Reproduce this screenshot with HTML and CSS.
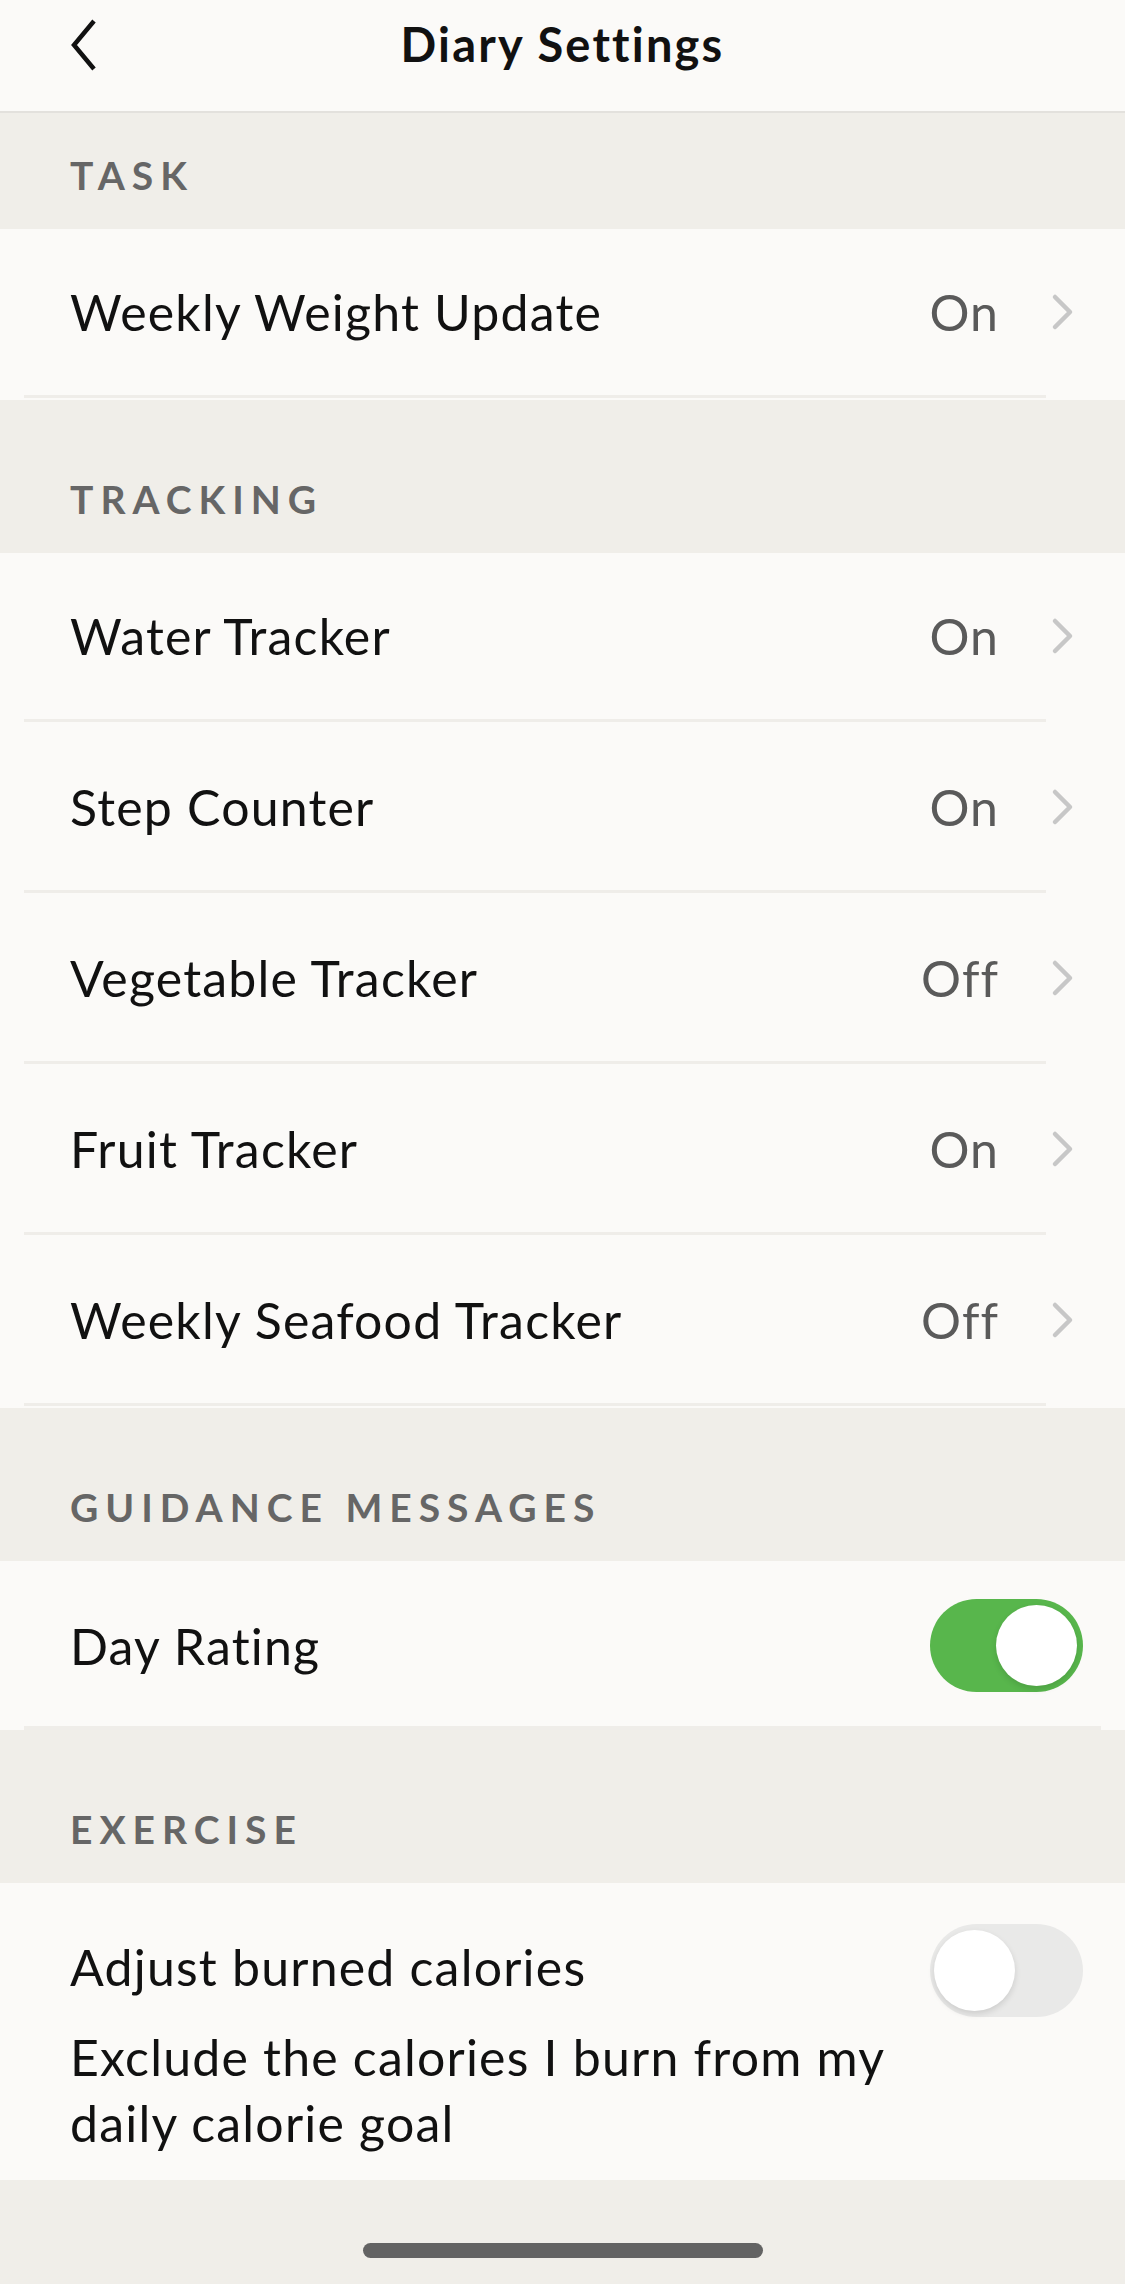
FILE: index.html
```html
<!DOCTYPE html>
<html lang="en">
<head>
    <meta charset="UTF-8">
    <meta name="viewport" content="width=device-width, initial-scale=1.0">
    <title>Diary Settings</title>
    <link rel="stylesheet" href="styles.css">
</head>
<body>
    <div class="navbar">
        <div class="nav-left">
            <svg class="back" width="28" height="52" viewBox="0 0 28 52">
                <polyline points="24,2 4,26 24,50" fill="none" stroke="#111" stroke-width="4.5"/>
            </svg>
        </div>
        <h1>Diary Settings</h1>
        <div class="nav-right"></div>
    </div>

    <div class="section first">
        <div class="section-title">TASK</div>
        <div class="row">
            <span class="label">Weekly Weight Update</span>
            <span class="value">On</span>
            <svg class="chev" width="24" height="38" viewBox="0 0 24 38"><polyline points="4,4 19,19 4,34" fill="none" stroke="#c7c7c7" stroke-width="4.5" stroke-linecap="round" stroke-linejoin="round"/></svg>
        </div>
    </div>

    <div class="section">
        <div class="section-title">TRACKING</div>
        <div class="row">
            <span class="label">Water Tracker</span>
            <span class="value">On</span>
            <svg class="chev" width="24" height="38" viewBox="0 0 24 38"><polyline points="4,4 19,19 4,34" fill="none" stroke="#c7c7c7" stroke-width="4.5" stroke-linecap="round" stroke-linejoin="round"/></svg>
        </div>
        <div class="row">
            <span class="label">Step Counter</span>
            <span class="value">On</span>
            <svg class="chev" width="24" height="38" viewBox="0 0 24 38"><polyline points="4,4 19,19 4,34" fill="none" stroke="#c7c7c7" stroke-width="4.5" stroke-linecap="round" stroke-linejoin="round"/></svg>
        </div>
        <div class="row">
            <span class="label">Vegetable Tracker</span>
            <span class="value">Off</span>
            <svg class="chev" width="24" height="38" viewBox="0 0 24 38"><polyline points="4,4 19,19 4,34" fill="none" stroke="#c7c7c7" stroke-width="4.5" stroke-linecap="round" stroke-linejoin="round"/></svg>
        </div>
        <div class="row">
            <span class="label">Fruit Tracker</span>
            <span class="value">On</span>
            <svg class="chev" width="24" height="38" viewBox="0 0 24 38"><polyline points="4,4 19,19 4,34" fill="none" stroke="#c7c7c7" stroke-width="4.5" stroke-linecap="round" stroke-linejoin="round"/></svg>
        </div>
        <div class="row">
            <span class="label">Weekly Seafood Tracker</span>
            <span class="value">Off</span>
            <svg class="chev" width="24" height="38" viewBox="0 0 24 38"><polyline points="4,4 19,19 4,34" fill="none" stroke="#c7c7c7" stroke-width="4.5" stroke-linecap="round" stroke-linejoin="round"/></svg>
        </div>
    </div>

    <div class="section">
        <div class="section-title">GUIDANCE MESSAGES</div>
        <div class="row toggle-row">
            <span class="label">Day Rating</span>
            <div class="switch on"><div class="knob"></div></div>
        </div>
    </div>

    <div class="section">
        <div class="section-title">EXERCISE</div>
        <div class="row exercise-row">
            <div class="exercise-text">
                <div class="label">Adjust burned calories</div>
                <div class="desc">Exclude the calories I burn from my daily calorie goal</div>
            </div>
            <div class="switch"><div class="knob"></div></div>
        </div>
    </div>

    <div class="home-area">
        <div class="home-bar"></div>
    </div>
</body>
</html>
```

FILE: styles.css
```css
body {
    margin: 0;
    width: 1125px;
    min-height: 2284px;
    background-color: #f0eee9;
    font-family: Lato, "Noto Sans", sans-serif;
    color: #111;
}
.navbar {
    display: grid;
    grid-template-columns: 1fr auto 1fr;
    align-items: start;
    height: 111px;
    background: #fbfaf8;
    border-bottom: 2px solid #e3e1dd;
}
.nav-left {
    padding: 19px 0 0 70px;
}
.back {
    display: block;
}
h1 {
    margin: 0;
    padding-top: 14px;
    font-size: 47px;
    line-height: 60px;
    font-weight: 700;
    letter-spacing: 2.2px;
}
.section {
    margin-top: 37px;
}
.section.first {
    margin-top: 0;
}
.section-title {
    display: flex;
    align-items: center;
    height: 108px;
    padding: 8px 70px 0;
    font-size: 39px;
    font-weight: 700;
    letter-spacing: 7px;
    color: #666;
}
.row {
    display: flex;
    align-items: center;
    box-sizing: border-box;
    height: 171px;
    padding: 0 50px 5px 70px;
    background: linear-gradient(#efede9, #efede9) no-repeat 24px calc(100% - 2px) / 1022px 3px, #fbfaf8;
}
.label {
    flex: 1;
    font-size: 50px;
    line-height: 66px;
    letter-spacing: 1.2px;
}
.value {
    font-size: 50px;
    letter-spacing: 1px;
    color: #5a5a5a;
    margin-right: 52px;
}
.chev {
    display: block;
}
.toggle-row {
    height: 169px;
    padding: 0 42px 0 70px;
    background: linear-gradient(#efede9, #efede9) no-repeat 24px 100% / 1077px 4px, #fbfaf8;
}
.switch {
    position: relative;
    width: 153px;
    height: 93px;
    border-radius: 47px;
    background: #e9e9e8;
    flex-shrink: 0;
}
.switch.on {
    background: #58b64c;
}
.knob {
    position: absolute;
    top: 6px;
    left: 4px;
    width: 81px;
    height: 81px;
    border-radius: 50%;
    background: #fff;
    box-shadow: 0 3px 6px rgba(0, 0, 0, 0.12);
}
.switch.on .knob {
    left: 66px;
}
.exercise-row {
    height: 297px;
    align-items: flex-start;
    padding: 51px 42px 0 70px;
    background: #fbfaf8;
}
.exercise-row .switch {
    margin-top: -10px;
}
.exercise-text {
    flex: 1;
    padding-right: 20px;
}
.desc {
    margin-top: 24px;
    font-size: 50px;
    line-height: 66px;
    letter-spacing: 1.2px;
}
.home-area {
    padding-top: 63px;
}
.home-bar {
    width: 400px;
    height: 15px;
    margin: 0 auto;
    border-radius: 8px;
    background: #636363;
}
```
